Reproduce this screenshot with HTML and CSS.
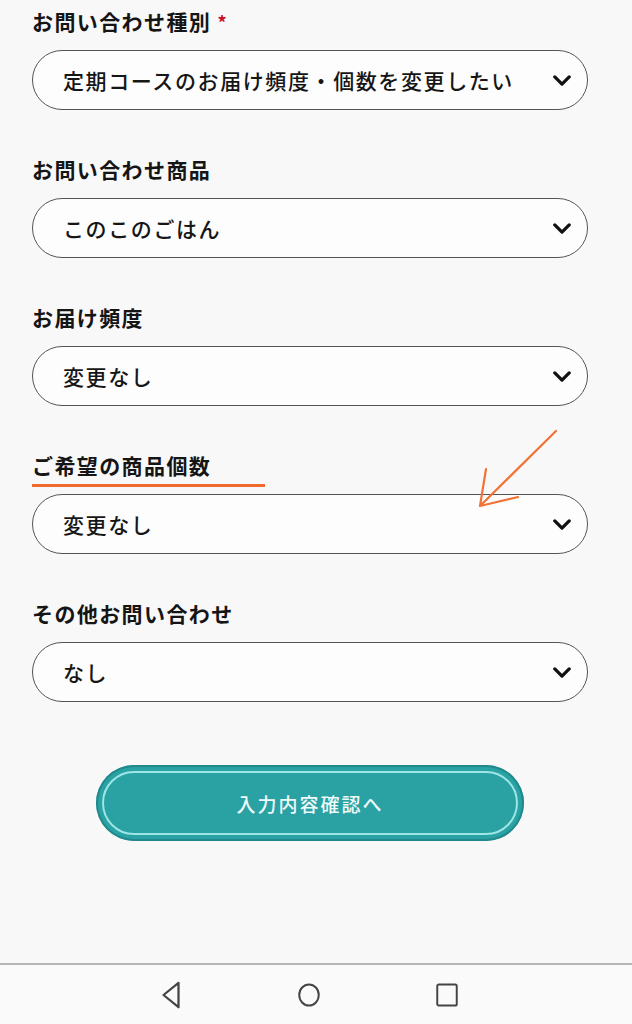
FILE: index.html
```html
<!DOCTYPE html>
<html lang="ja">
<head>
<meta charset="utf-8">
<link rel="stylesheet" href="styles.css">
</head>
<body>
<div class="page">
  <form class="form">
    <div class="field">
      <div class="label">お問い合わせ種別 <span class="req">*</span></div>
      <div class="select"><span class="value">定期コースのお届け頻度・個数を変更したい</span><svg class="chev" viewBox="0 0 20 12"><path d="M2 2 L10 10 L18 2"/></svg></div>
    </div>
    <div class="field">
      <div class="label">お問い合わせ商品</div>
      <div class="select"><span class="value">このこのごはん</span><svg class="chev" viewBox="0 0 20 12"><path d="M2 2 L10 10 L18 2"/></svg></div>
    </div>
    <div class="field">
      <div class="label">お届け頻度</div>
      <div class="select"><span class="value">変更なし</span><svg class="chev" viewBox="0 0 20 12"><path d="M2 2 L10 10 L18 2"/></svg></div>
    </div>
    <div class="field marked">
      <div class="label">ご希望の商品個数</div>
      <div class="select"><span class="value">変更なし</span><svg class="chev" viewBox="0 0 20 12"><path d="M2 2 L10 10 L18 2"/></svg></div>
      <span class="underline"></span>
      <svg class="arrow" viewBox="0 0 90 90"><path d="M84 3 L8 78 M8 78 L46 69 M8 78 L14 41"/></svg>
    </div>
    <div class="field">
      <div class="label">その他お問い合わせ</div>
      <div class="select"><span class="value">なし</span><svg class="chev" viewBox="0 0 20 12"><path d="M2 2 L10 10 L18 2"/></svg></div>
    </div>
    <div class="actions">
      <button type="button" class="submit"><span class="inner">入力内容確認へ</span></button>
    </div>
  </form>
  <nav class="navbar">
    <svg class="nav-icon" viewBox="0 0 24 32"><path d="M20 3 L4 16 L20 29 Z"/></svg>
    <svg class="nav-icon" viewBox="0 0 32 32"><ellipse cx="16" cy="16" rx="12" ry="13"/></svg>
    <svg class="nav-icon" viewBox="0 0 32 32"><rect x="4" y="3" width="24" height="26" rx="2"/></svg>
  </nav>
</div>
</body>
</html>
```

FILE: styles.css
```css
* { box-sizing: border-box; }
html, body { margin: 0; padding: 0; }
body {
  background: #f8f8f8;
  font-family: "Noto Sans CJK JP", "Noto Sans", sans-serif;
  color: #111;
}
.page {
  width: 632px;
  height: 1024px;
  display: flex;
  flex-direction: column;
}
.form {
  flex: 1;
  padding: 8px 44px 0 32px;
  display: flex;
  flex-direction: column;
  gap: 46px;
}
.field {
  position: relative;
  display: flex;
  flex-direction: column;
  gap: 16px;
}
.label {
  font-size: 21px;
  line-height: 26px;
  height: 26px;
  font-weight: 700;
  letter-spacing: 1.4px;
  color: #151515;
}
.req { color: #c8102e; font-size: 18px; }
.select {
  height: 60px;
  border: 1.5px solid #555;
  border-radius: 30px;
  background: #fdfdfd;
  display: flex;
  align-items: center;
  justify-content: space-between;
  padding: 0 16px 0 30px;
}
.value {
  font-size: 21px;
  font-weight: 500;
  letter-spacing: 1.6px;
  color: #161616;
}
.chev {
  width: 18px;
  height: 11px;
  fill: none;
  stroke: #111;
  stroke-width: 3.6;
  stroke-linecap: round;
  stroke-linejoin: round;
}
.underline {
  position: absolute;
  left: 0;
  top: 32px;
  width: 233px;
  height: 2.5px;
  background: #ef6a2b;
}
.arrow {
  position: absolute;
  left: 440px;
  top: -24px;
  width: 90px;
  height: 90px;
  fill: none;
  stroke: #f07337;
  stroke-width: 2.2;
  stroke-linecap: round;
}
.actions {
  display: flex;
  justify-content: center;
  padding-top: 17px;
}
.submit {
  width: 428px;
  height: 76px;
  border: none;
  border-radius: 38px;
  background: #2aa2a4;
  box-shadow: inset 0 0 0 2px #21898c;
  padding: 6px;
  font-family: inherit;
  cursor: pointer;
}
.inner {
  display: flex;
  align-items: center;
  justify-content: center;
  height: 100%;
  border: 2px solid #9ee6e6;
  border-radius: 32px;
  color: #eefafa;
  font-size: 19px;
  font-weight: 500;
  letter-spacing: 2px;
}
.navbar {
  height: 61px;
  border-top: 2px solid #b5b5b5;
  background: #fafafa;
  display: flex;
  align-items: center;
  justify-content: center;
  gap: 112px;
  padding-right: 14px;
}
.nav-icon {
  width: 26px;
  height: 30px;
  fill: none;
  stroke: #444;
  stroke-width: 2.4;
  stroke-linejoin: round;
}
```
